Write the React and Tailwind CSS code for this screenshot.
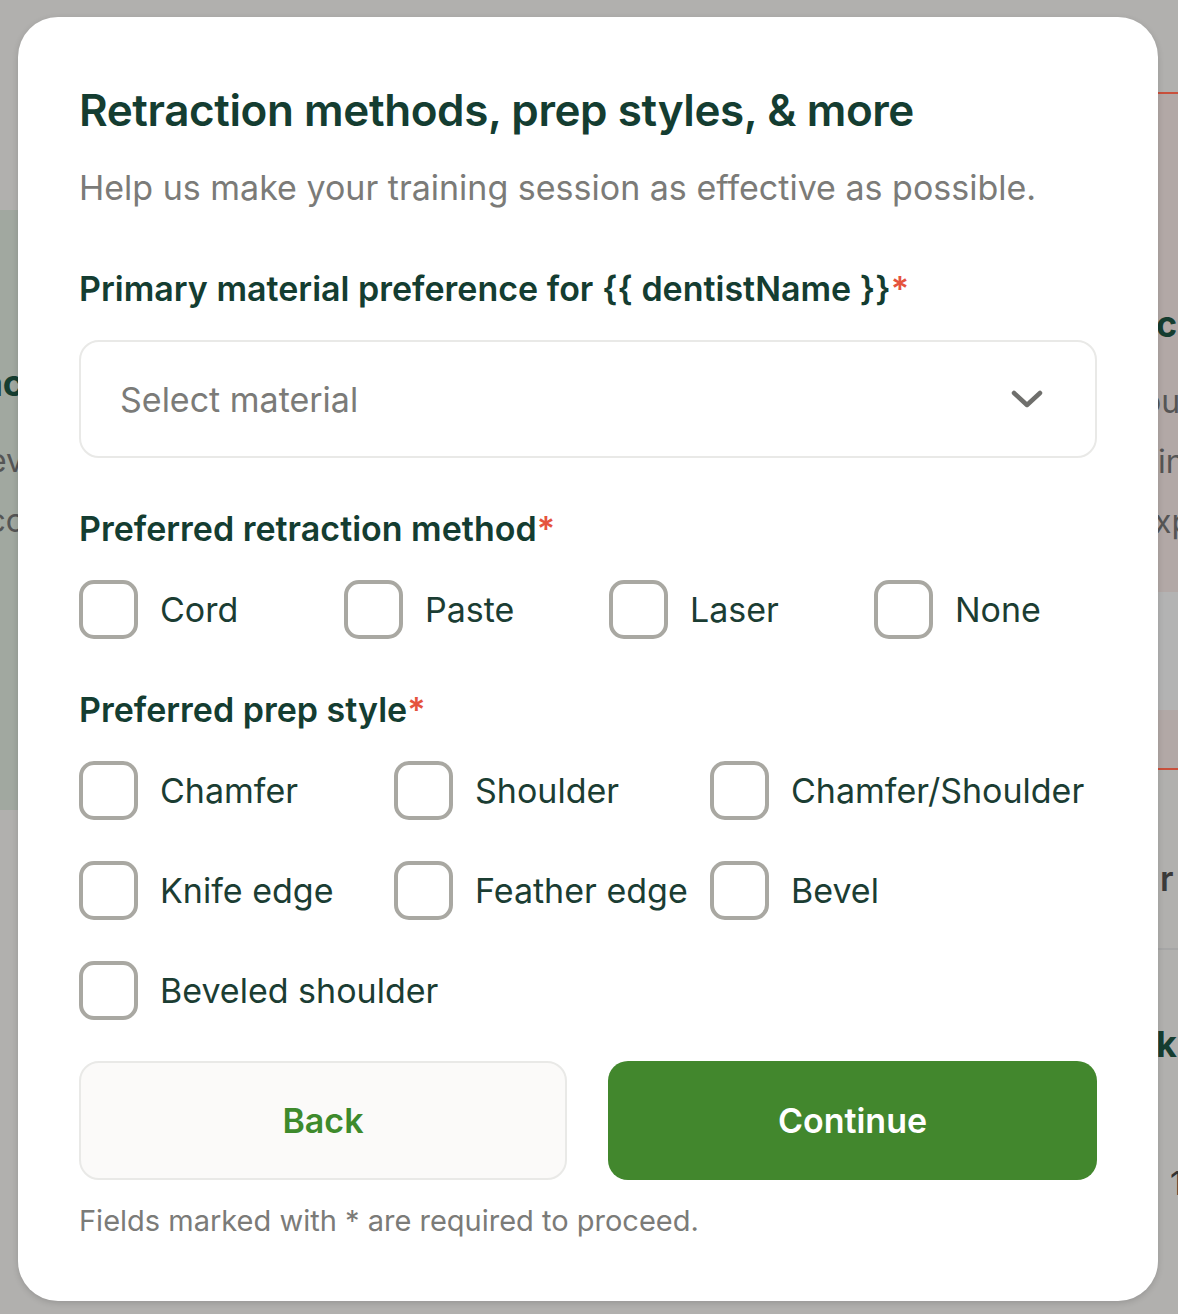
import React from "react";

const RETRACTION = ["Cord", "Paste", "Laser", "None"];
const PREP = [
  "Chamfer",
  "Shoulder",
  "Chamfer/Shoulder",
  "Knife edge",
  "Feather edge",
  "Bevel",
  "Beveled shoulder",
];

const Checkbox = ({ label }) => (
  <label className="flex h-[60px] items-center gap-[22px]">
    <span className="h-[59px] w-[59px] shrink-0 rounded-[15px] border-[4px] border-[#a9a8a2] bg-white" />
    <span className="whitespace-nowrap text-[34px] text-[#1b3d33]">{label}</span>
  </label>
);

const Label = ({ children }) => (
  <p className="text-[34px] font-semibold leading-none text-[#143d31]">
    {children}
    <span className="text-[#e5533d]">*</span>
  </p>
);

const Backdrop = () => (
  <div className="flex h-full w-full justify-between">
    <div className="mt-[210px] flex h-[600px] w-[24px] flex-col items-end overflow-hidden bg-[#a1a8a0] pt-[155px]">
      <p className="whitespace-nowrap text-[36px] font-bold leading-none text-[#153d30]">Prac</p>
      <p className="mt-[44px] whitespace-nowrap text-[32px] leading-none text-[#555]">lev</p>
      <p className="mt-[28px] whitespace-nowrap text-[32px] leading-none text-[#555]">acc</p>
    </div>
    <div className="flex w-[40px] flex-col">
      <div className="mt-[92px] h-[500px] border-t-2 border-[#c9503c] bg-[#b2a8a6] pt-[212px]">
        <p className="whitespace-nowrap pl-[18px] text-[36px] font-bold leading-none text-[#153d30]">ca</p>
        <p className="mt-[44px] whitespace-nowrap pl-[4px] text-[32px] leading-none text-[#555]">ou</p>
        <p className="mt-[28px] whitespace-nowrap pl-[20px] text-[32px] leading-none text-[#555]">in</p>
        <p className="mt-[28px] whitespace-nowrap pl-[16px] text-[32px] leading-none text-[#555]">xp</p>
      </div>
      <div className="h-[118px] bg-[#b3b3b3]" />
      <div className="h-[60px] border-b-2 border-[#c9503c] bg-[#b2a8a6]" />
      <div className="h-[180px] border-b-2 border-[#a6a6a6] bg-[#b1b0ae] pl-[22px] pt-[92px]">
        <p className="text-[34px] font-semibold leading-none text-[#3a3a3a]">r</p>
      </div>
      <div className="pl-[18px] pt-[76px]">
        <p className="text-[36px] font-bold leading-none text-[#153d30]">k</p>
        <p className="mt-[106px] pl-[14px] text-[32px] leading-none text-[#333]">1</p>
      </div>
    </div>
  </div>
);

const App = () => {
  return (
    <div
      className="relative h-[1314px] w-[1178px] overflow-hidden bg-[#b1b0ae]"
      style={{ fontFamily: "Inter, 'Noto Sans', sans-serif" }}
    >
      <Backdrop />
      <div className="absolute inset-0 pl-[18px] pt-[17px]">
        <div className="h-[1284px] w-[1140px] rounded-[40px] bg-white px-[61px] pt-[71px] shadow-[0_2px_6px_rgba(0,0,0,0.15)]">
          <h1 className="text-[44px] font-semibold leading-none tracking-[-0.4px] text-[#143d31]">
            Retraction methods, prep styles, &amp; more
          </h1>
          <p className="mt-[39px] text-[34px] leading-none text-[#7b7b78]">
            Help us make your training session as effective as possible.
          </p>

          <div className="mt-[67px]">
            <Label>Primary material preference for {"{{ dentistName }}"}</Label>
            <div className="mt-[34px] flex h-[118px] items-center justify-between rounded-[20px] border-2 border-[#e9e9e7] pl-[39px] pr-[52px]">
              <span className="text-[34px] text-[#7b7b78]">Select material</span>
              <svg width="32" height="20" viewBox="0 0 32 20" fill="none">
                <path d="M3 4l13 12L29 4" stroke="#6f6f6c" strokeWidth="4.5" strokeLinecap="round" strokeLinejoin="round" />
              </svg>
            </div>
          </div>

          <div className="mt-[54px]">
            <Label>Preferred retraction method</Label>
            <div className="mt-[33px] grid grid-cols-[265px_265px_265px_1fr]">
              {RETRACTION.map((item) => (
                <Checkbox key={item} label={item} />
              ))}
            </div>
          </div>

          <div className="mt-[54px]">
            <Label>Preferred prep style</Label>
            <div className="mt-[33px] grid grid-cols-[315px_316px_1fr] gap-y-[40px]">
              {PREP.map((item) => (
                <Checkbox key={item} label={item} />
              ))}
            </div>
          </div>

          <div className="mt-[41px] flex justify-between">
            <button className="h-[119px] w-[488px] rounded-[20px] border-2 border-[#e9e9e7] bg-[#fbfaf9] text-[34px] font-semibold text-[#3e8a2c]">
              Back
            </button>
            <button className="h-[119px] w-[489px] rounded-[20px] bg-[#42872d] text-[34px] font-semibold text-white">
              Continue
            </button>
          </div>

          <p className="mt-[26px] text-[29px] leading-none text-[#7b7b78]">
            Fields marked with * are required to proceed.
          </p>
        </div>
      </div>
    </div>
  );
};

export default App;
